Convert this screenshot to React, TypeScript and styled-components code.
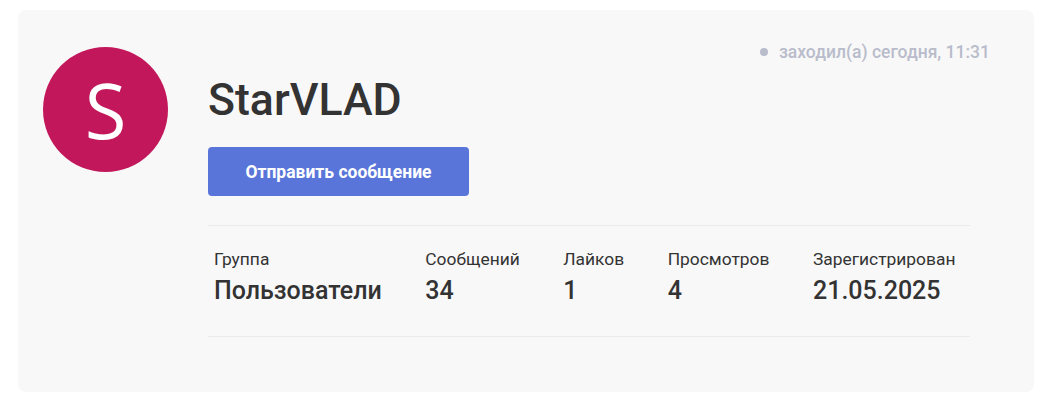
import React from 'react';
import styled, { createGlobalStyle } from 'styled-components';

const GlobalStyle = createGlobalStyle`
  html, body {
    margin: 0;
    padding: 0;
    background: #ffffff;
    font-family: Roboto, 'Liberation Sans', Arial, sans-serif;
  }
`;

type Stat = {
  label: string;
  value: string;
};

const stats: Stat[] = [
  { label: 'Группа', value: 'Пользователи' },
  { label: 'Сообщений', value: '34' },
  { label: 'Лайков', value: '1' },
  { label: 'Просмотров', value: '4' },
  { label: 'Зарегистрирован', value: '21.05.2025' },
];

const ProfileCard = () => {
  return (
    <Page>
      <Card>
        <Status>
          <Dot />
          заходил(а) сегодня, 11:31
        </Status>
        <Avatar>S</Avatar>
        <Main>
          <Name>StarVLAD</Name>
          <MessageButton type="button">Отправить сообщение</MessageButton>
          <Stats>
            {stats.map((s, i) => (
              <StatItem key={i}>
                <StatLabel>{s.label}</StatLabel>
                <StatValue>{s.value}</StatValue>
              </StatItem>
            ))}
          </Stats>
        </Main>
      </Card>
    </Page>
  );
};

const Page = styled.div`
  padding: 10px 12px 18px 18px;
`;

const Card = styled.section`
  position: relative;
  display: flex;
  align-items: flex-start;
  gap: 40px;
  width: 1016px;
  height: 382px;
  box-sizing: border-box;
  padding: 37px 64px 0 25px;
  background: #f8f8f8;
  border-radius: 8px;
`;

const Status = styled.div`
  position: absolute;
  top: 32px;
  right: 44px;
  display: flex;
  align-items: center;
  gap: 11px;
  font-size: 17.5px;
  font-weight: 500;
  color: #b9bccb;
`;

const Dot = styled.span`
  width: 8px;
  height: 8px;
  border-radius: 50%;
  background: #b9bccb;
`;

const Avatar = styled.div`
  flex: none;
  width: 125px;
  height: 125px;
  border-radius: 50%;
  background: #c2185b;
  color: #ffffff;
  display: flex;
  align-items: center;
  justify-content: center;
  font-family: 'Open Sans', 'Noto Sans', sans-serif;
  font-size: 76px;
  line-height: 1;
`;

const Main = styled.div`
  flex: 1;
  display: flex;
  flex-direction: column;
  align-items: flex-start;
`;

const Name = styled.h1`
  margin: 27px 0 21px;
  font-size: 44.6px;
  font-weight: 500;
  line-height: normal;
  color: #333333;
`;

const MessageButton = styled.button`
  width: 261px;
  height: 49px;
  border: none;
  border-radius: 4px;
  background: #5a75d9;
  color: #ffffff;
  font-family: inherit;
  font-size: 17.5px;
  font-weight: 700;
  cursor: pointer;
`;

const Stats = styled.div`
  align-self: stretch;
  display: flex;
  gap: 43.5px;
  margin-top: 29px;
  padding: 23px 6px 31px;
  border-top: 1px solid #ebebeb;
  border-bottom: 1px solid #ebebeb;
`;

const StatItem = styled.div`
  display: flex;
  flex-direction: column;
  gap: 7px;
`;

const StatLabel = styled.span`
  font-size: 17.4px;
  color: #333333;
`;

const StatValue = styled.span`
  font-size: 25px;
  font-weight: 500;
  color: #333333;
`;

const App = () => (
  <>
    <GlobalStyle />
    <ProfileCard />
  </>
);

export default App;
